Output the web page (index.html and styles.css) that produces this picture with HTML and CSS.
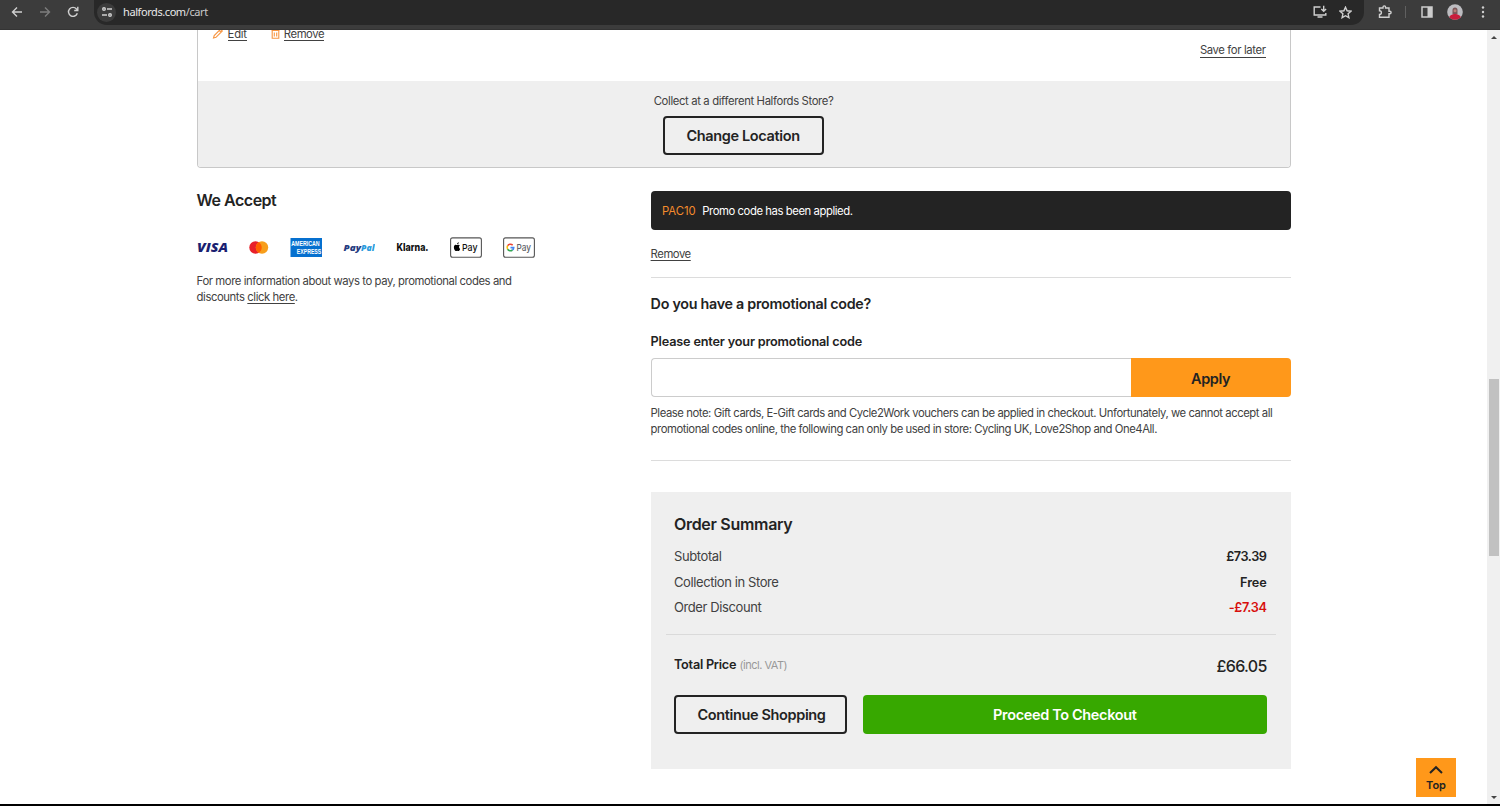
FILE: index.html
```html
<!DOCTYPE html>
<html lang="en">
<head>
<meta charset="utf-8">
<title>Basket | Halfords</title>
<link rel="stylesheet" href="styles.css">
</head>
<body>
<header class="chrome">
  <nav class="chrome-nav">
    <svg width="12" height="12" viewBox="0 0 12 12" class="ico"><path d="M11 6H1.800M6 1.500L1.500 6L6 10.500"/></svg>
    <svg width="12" height="12" viewBox="0 0 12 12" class="ico dim"><path d="M1 6h9.200M6 1.500L10.500 6L6 10.500"/></svg>
    <svg width="12" height="12" viewBox="0 0 12 12" class="ico"><path d="M10.300 7.200A4.500 4.500 0 1 1 9.500 3L10.700 4.300M10.800 .8V4.500H7.200"/></svg>
  </nav>
  <div class="omnibox">
    <span class="site-info"><svg width="12" height="12" viewBox="0 0 12 12" class="ico"><circle cx="3" cy="3" r="1.300"/><path d="M6 3h5M1 9h5"/><circle cx="9" cy="9" r="1.300"/></svg></span>
    <span class="url">halfords.com<span class="path">/cart</span></span>
    <span class="omni-actions">
      <svg width="14" height="14" viewBox="0 0 14 14" class="ico"><path d="M7.500 2H1.200V10H12.800V8M4.500 12H9.500M10.700 .8V6M8.300 4L10.700 6.200L13.100 4"/></svg>
      <svg width="13" height="13" viewBox="0 0 13 13" class="ico star"><path d="M6.500 1.200L8.100 4.800L12 5.200L9.100 7.800L9.900 11.700L6.500 9.700L3.100 11.700L3.900 7.800L1 5.200L4.900 4.800Z"/></svg>
    </span>
  </div>
  <div class="chrome-tools">
    <svg width="14" height="14" viewBox="0 0 14 14" class="ico"><path d="M1.500 3H5V2.200a1.300 1.300 0 0 1 2.600 0V3H11V6.200h.8a1.300 1.300 0 0 1 0 2.600H11V12.300H1.500V9.500a1.900 1.900 0 0 0 0-3.800Z"/></svg>
    <i class="sep"></i>
    <svg width="12" height="12" viewBox="0 0 12 12" class="panel"><path d="M1 1H11V11H1Z" fill="none" stroke="#ccc" stroke-width="1.500"/><path d="M6.500 1H11V11H6.500Z" fill="#ccc"/></svg>
    <svg width="16" height="16" viewBox="0 0 16 16" class="avatar"><defs><clipPath id="av"><circle cx="8" cy="8" r="7.800"/></clipPath></defs><g clip-path="url(#av)"><rect width="16" height="16" fill="#bcbcc0"/><path d="M5.500 10V6a2.500 2.500 0 0 1 5 0v4Z" fill="#7a5658"/><circle cx="8" cy="6.800" r="1.500" fill="#b98278"/><path d="M1.500 16c0-4.500 4-6 6.500-6s6.500 1.500 6.500 6Z" fill="#c81e3c"/></g></svg>
    <svg width="4" height="14" viewBox="0 0 4 14" class="dots"><circle cx="2" cy="2.500" r="1.200"/><circle cx="2" cy="7" r="1.200"/><circle cx="2" cy="11.500" r="1.200"/></svg>
  </div>
</header>
<div class="viewport">
  <main class="page">
    <section class="store-card">
      <div class="item-row">
        <div class="item-actions">
          <svg width="12" height="12" viewBox="0 0 12 12" class="orange"><path d="M1.500 9L2.200 6.500L8.500 .2L10.300 2L4 8.300ZM7.300 1.500L9 3.200"/></svg>
          <a class="link edit">Edit</a>
          <svg width="9" height="12" viewBox="0 0 9 12" class="orange bin"><path d="M.5 1.500H8.500M1.200 1.500V9.300H7.800V1.500M3 .5H6M3.300 3.500V7.500M5.700 3.500V7.500"/></svg>
          <a class="link rem">Remove</a>
        </div>
        <a class="link save">Save for later</a>
      </div>
      <div class="store-foot">
        <p class="collect">Collect at a different Halfords Store?</p>
        <button class="btn outline change"><span>Change Location</span></button>
      </div>
    </section>
    <div class="columns">
      <section class="accept">
        <h2 class="h2 we">We Accept</h2>
        <div class="pays">
          <svg class="pay" width="32" height="22" viewBox="0 0 32 22"><text x="1" y="15" class="visa" textLength="31" lengthAdjust="spacingAndGlyphs">VISA</text></svg>
          <svg class="pay" width="20" height="22" viewBox="6 0 20 22"><circle cx="12.500" cy="10.500" r="6.200" fill="#e8202a"/><circle cx="19" cy="10.500" r="6.200" fill="#f79e1b"/><path d="M15.750 5.200a6.200 6.200 0 0 1 0 10.600a6.200 6.200 0 0 1 0-10.600Z" fill="#ff5f00"/></svg>
          <svg class="pay" width="32" height="22" viewBox="0 0 32 22"><rect x=".5" y="1" width="31.500" height="19" fill="#0670cf"/><text x="1.200" y="9.400" class="amex" textLength="28.500" lengthAdjust="spacingAndGlyphs">AMERICAN</text><text x="6.800" y="16.600" class="amex" textLength="24.500" lengthAdjust="spacingAndGlyphs">EXPRESS</text></svg>
          <svg class="pay" width="32" height="22" viewBox="0 0 32 22"><text x=".5" y="13.600" class="paypal" textLength="17.500" lengthAdjust="spacingAndGlyphs">Pay</text><text x="18" y="13.600" class="paypal pal" textLength="13.500" lengthAdjust="spacingAndGlyphs">Pal</text></svg>
          <svg class="pay" width="33" height="22" viewBox="0 0 33 22"><text x=".5" y="14.100" class="klarna" textLength="32" lengthAdjust="spacingAndGlyphs">Klarna.</text></svg>
          <svg class="pay" width="32" height="22" viewBox="0 0 32 22"><rect x=".6" y=".9" width="30.800" height="19.400" rx="2" class="paybox"/><path d="M9.900 8.300C8.500 7 7.600 8 7.100 8C6.500 8 5.800 7.300 4.900 7.900C3.200 8.900 3.900 12.300 5.300 13.800C6 14.500 6.500 13.700 7.200 13.700C7.900 13.700 8.400 14.600 9.100 13.700C9.600 13.100 10 12.500 10.100 11.900C8.700 11.100 8.700 9.200 9.900 8.300ZM7.100 7.300C7.100 6.100 7.900 5.300 8.800 5.200C8.900 6.400 8 7.300 7.100 7.300Z"/><text x="12" y="14" class="ptext" textLength="15.500" lengthAdjust="spacingAndGlyphs">Pay</text></svg>
          <svg class="pay" width="32" height="22" viewBox="0 0 32 22"><rect x=".6" y=".9" width="30.800" height="19.400" rx="2" class="paybox"/><g fill="none" stroke-width="1.600"><path d="M9.700 8.200A3.400 3.400 0 0 0 4.600 8.700" stroke="#ea4335"/><path d="M4.600 8.700A3.400 3.400 0 0 0 4.600 12.300" stroke="#fbbc04"/><path d="M4.600 12.300A3.400 3.400 0 0 0 9.500 13" stroke="#34a853"/><path d="M9.500 13A3.400 3.400 0 0 0 10.700 10.600H7.500" stroke="#4285f4"/></g><text x="13.500" y="14" class="ptext g" textLength="14.500" lengthAdjust="spacingAndGlyphs">Pay</text></svg>
        </div>
        <p class="info"><span class="i1">For more information about ways to pay, promotional codes and</span><br><span class="i2">discounts <a class="u">click here</a>.</span></p>
      </section>
      <section class="order">
        <div class="banner"><span class="code">PAC10</span><span class="applied">Promo code has been applied.</span></div>
        <a class="u remove">Remove</a>
        <div class="promo">
          <h3 class="h3">Do you have a promotional code?</h3>
          <label class="label">Please enter your promotional code</label>
          <div class="field"><input class="input" type="text"><button class="btn apply"><span>Apply</span></button></div>
          <p class="note"><span class="n1">Please note: Gift cards, E-Gift cards and Cycle2Work vouchers can be applied in checkout. Unfortunately, we cannot accept all</span><br><span class="n2">promotional codes online, the following can only be used in store: Cycling UK, Love2Shop and One4All.</span></p>
        </div>
        <div class="summary">
          <h2 class="h2 os">Order Summary</h2>
          <div class="line"><span class="sub">Subtotal</span><b class="v1">£73.39</b></div>
          <div class="line"><span class="col">Collection in Store</span><b class="v2">Free</b></div>
          <div class="line"><span class="dis">Order Discount</span><b class="red v3">-£7.34</b></div>
          <div class="total"><div><b class="tp">Total Price</b> <small class="vat">(incl. VAT)</small></div><span class="sum">£66.05</span></div>
          <div class="actions"><button class="btn outline cont"><span>Continue Shopping</span></button><button class="btn green"><span>Proceed To Checkout</span></button></div>
        </div>
      </section>
    </div>
  </main>
  <div class="scrollbar"><i class="arrow up"></i><i class="thumb"></i><i class="arrow down"></i></div>
  <a class="top"><svg width="16" height="10" viewBox="0 0 16 10"><path d="M2 8L8 2.200L14 8"/></svg><span>Top</span></a>
</div>
</body>
</html>
```
FILE: styles.css
```css
* { box-sizing: border-box; }
body { margin: 0; width: 1500px; height: 806px; overflow: hidden; background: #000; font-family: Inter, "Liberation Sans", sans-serif; font-size: 11.3px; color: #414141; }
h2, h3, p { margin: 0; }
svg { display: block; flex: none; }

.chrome { display: flex; height: 30px; background: #3c3c3c; border-bottom: 1px solid #343434; }
.chrome-nav { display: flex; align-items: center; gap: 16px; width: 94px; height: 24px; padding-left: 11px; }
.ico { fill: none; stroke: #d0d0d0; stroke-width: 1.4; }
.dim { stroke: #7d7d7d; }
.omnibox { display: flex; align-items: center; width: 1270px; height: 25px; padding: 0 0 1px 3px; background: #282828; border-radius: 0 0 13px 13px; }
.site-info { display: flex; align-items: center; justify-content: center; width: 19px; height: 19px; border-radius: 50%; background: #3c3c3c; }
.url { margin-left: 7px; padding-bottom: 2px; font-family: "Noto Sans", sans-serif; font-size: 11px; letter-spacing: -.42px; color: #e8e8e8; }
.path { color: #c8c8c8; }
.omni-actions { display: flex; align-items: center; gap: 12px; margin-left: auto; padding-right: 12px; }
.chrome-tools { display: flex; align-items: center; height: 24px; padding-left: 14px; }
.sep { width: 1px; height: 12px; margin: 0 15px 0 13px; background: #606060; }
.avatar { margin: 0 18px 0 14px; }
.dots { fill: #d0d0d0; }

.viewport { position: relative; display: flex; justify-content: space-between; height: 774px; background: #fff; }
.page { width: 1094px; margin-left: 196.6px; }
.store-card { height: 138px; border: 1px solid #c8c8c8; border-top: 0; border-radius: 0 0 4px 4px; overflow: hidden; }
.item-row { display: flex; justify-content: space-between; height: 51px; padding: 0 24px 0 14px; }
.item-actions { display: flex; height: 11px; align-items: flex-end; }
.orange { fill: none; stroke: #f79540; stroke-width: 1.1; }
.bin { margin-left: 24px; }
.link { line-height: 13px; border-bottom: 1px solid #414141; white-space: nowrap; }
.edit, .rem { margin-left: 4px; letter-spacing: -.4px; line-height: 11px; }
.edit { letter-spacing: -.25px; }
.save { align-self: flex-start; margin-top: 14px; letter-spacing: -.37px; }
.store-foot { display: flex; flex-direction: column; align-items: center; height: 86px; background: #efefef; }
.collect { line-height: 16px; margin-top: 12px; letter-spacing: -.36px; }
.btn { display: flex; align-items: center; justify-content: center; height: 39px; padding: 1px 0 0; border: 0; border-radius: 4px; font: 600 14.5px Inter, sans-serif; letter-spacing: -.36px; color: #232323; white-space: nowrap; }
.outline { background: transparent; border: 2px solid #232323; }
.change { width: 161px; margin: 7px 1px 0 0; padding: 0; }

.columns { display: flex; justify-content: space-between; padding-top: 23px; }
.h2 { font-size: 16px; line-height: 20px; font-weight: 600; letter-spacing: -.3px; color: #232323; white-space: nowrap; }
.we { letter-spacing: -.5px; margin-top: -1px; }
.pays { display: flex; gap: 21px; margin: 27px 0 0 -1px; }
.visa { font: italic 800 12px "Open Sans", sans-serif; fill: #1a1f71; }
.amex { font: 700 6.5px "Liberation Sans", sans-serif; fill: #fff; }
.paypal { font: italic 800 9.5px "Open Sans", sans-serif; fill: #253b80; }
.pal { fill: #2b9bdc; }
.klarna { font: 800 10.5px Inter, sans-serif; fill: #111; }
.paybox { fill: #fff; stroke: #555; stroke-width: 1.1; }
.ptext { font: 500 9.5px Inter, sans-serif; fill: #111; }
.g { fill: #5f6368; }
.info { margin-top: 15px; line-height: 15.6px; white-space: nowrap; letter-spacing: -.42px; }
.u { text-decoration: underline; text-underline-offset: 1.5px; }

.order { width: 640px; }
.banner { display: flex; align-items: center; gap: 6.5px; height: 39px; padding-left: 11.4px; border-radius: 4px; background: #232323; color: #fff; }
.code { color: #f68b2c; }
.applied { letter-spacing: -.43px; }
.remove { display: block; width: max-content; margin-top: 16px; line-height: 16px; letter-spacing: -.45px; }
.promo { height: 184px; margin-top: 15px; border: 1px solid #dcdcdc; border-width: 1px 0; white-space: nowrap; }
.h3 { margin-top: 16px; font-size: 14.3px; line-height: 20px; font-weight: 600; letter-spacing: -.28px; color: #232323; }
.label { display: block; margin-top: 20px; font-size: 12.7px; line-height: 16px; font-weight: 600; letter-spacing: -.18px; color: #232323; }
.field { display: flex; margin-top: 8px; }
.input { width: 480px; height: 39px; border: 1px solid #ccc; border-right: 0; border-radius: 4px 0 0 4px; background: #fff; }
.apply { width: 160px; border-radius: 0 4px 4px 0; background: #ff981a; }
.note { margin-top: 9px; line-height: 15.6px; letter-spacing: -.44px; }
.summary { height: 277px; margin-top: 31px; padding: 22px 24px 0 23.4px; background: #efefef; }
.line { display: flex; justify-content: space-between; height: 25.5px; line-height: 25.5px; font-size: 13px; letter-spacing: -.4px; white-space: nowrap; }
.os + .line { margin-top: 10px; }
.line b, .tp { font-size: 12.7px; font-weight: 600; color: #232323; }
.line .v2 { letter-spacing: -.1px; }
.tp { letter-spacing: -.25px; }
.line .red { color: #d8100c; letter-spacing: -.35px; }
.total { display: flex; justify-content: space-between; margin: 13px -9px 0 -8px; padding: 19px 9px 0 8px; border-top: 1px solid #dadada; line-height: 22px; white-space: nowrap; }
.vat { font-size: 11px; letter-spacing: -.48px; color: #999; }
.sum { font-size: 16px; font-weight: 500; letter-spacing: -.7px; color: #232323; line-height: 25px; }
.actions { display: flex; gap: 16px; margin-top: 16px; }
.cont { width: 173px; padding-left: 2px; }
.green { flex: 1; background: #37a800; color: #fff; }

.scrollbar { display: flex; flex-direction: column; align-items: center; width: 13px; height: 774px; padding: 6px 0 5px; background: #f0f0f0; }
.arrow { border: 3px solid transparent; }
.up { border-top: 0; border-bottom: 3px solid #444; }
.down { border-bottom: 0; border-top: 3px solid #444; margin-top: auto; }
.thumb { width: 10px; height: 177px; margin-top: 340px; background: #c1c1c1; }
.top { position: absolute; left: 1416px; top: 728px; display: flex; flex-direction: column; align-items: center; width: 40px; height: 39px; padding-top: 7px; background: #ff981a; color: #232323; font-size: 11px; font-weight: 600; line-height: 14px; }
.top svg { fill: none; stroke: #232323; stroke-width: 2; margin-bottom: 3px; }
```
